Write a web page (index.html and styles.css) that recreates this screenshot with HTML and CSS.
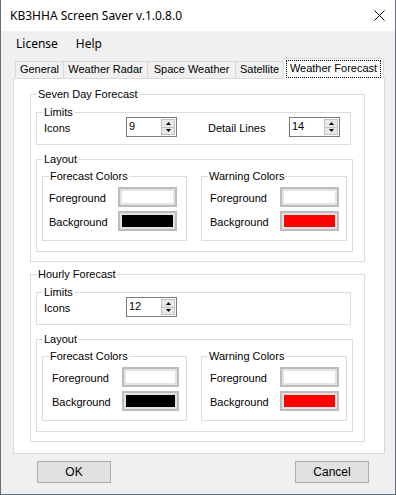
FILE: index.html
```html
<!DOCTYPE html>
<html lang="en">

<head>
    <meta charset="UTF-8">
    <meta name="viewport" content="width=device-width, initial-scale=1.0">
    <title>KB3HHA Screen Saver v.1.0.8.0</title>
    <link rel="stylesheet" href="styles.css">
</head>

<body>
    <div class="window">
        <div class="titlebar">
            <span class="title">KB3HHA Screen Saver v.1.0.8.0</span>
            <svg class="close" width="11" height="11" viewBox="0 0 11 11">
                <path d="M0.5 0.5L10.5 10.5M10.5 0.5L0.5 10.5" stroke="#000" stroke-width="1" fill="none" />
            </svg>
        </div>

        <div class="menubar">
            <span class="menu-item">License</span>
            <span class="menu-item">Help</span>
        </div>

        <div class="tabs">
            <div class="tab tab-general">General</div>
            <div class="tab tab-radar">Weather Radar</div>
            <div class="tab tab-space">Space Weather</div>
            <div class="tab tab-satellite">Satellite</div>
            <div class="tab tab-forecast active"><span class="focus">Weather Forecast</span></div>
        </div>

        <div class="panel">
            <!-- seven day -->
            <fieldset class="group outer">
                <legend>Seven Day Forecast</legend>
                <fieldset class="group limits">
                    <legend>Limits</legend>
                    <div class="limit-row">
                        <span class="lbl">Icons</span>
                        <div class="spin">
                            <span class="spin-value">9</span>
                            <div class="spin-btns">
                                <div class="spin-btn"><svg width="5" height="3" viewBox="0 0 5 3"><path d="M2.5 0L5 3H0Z" fill="#000"/></svg></div>
                                <div class="spin-btn"><svg width="5" height="3" viewBox="0 0 5 3"><path d="M0 0H5L2.5 3Z" fill="#000"/></svg></div>
                            </div>
                        </div>
                        <span class="lbl">Detail Lines</span>
                        <div class="spin">
                            <span class="spin-value">14</span>
                            <div class="spin-btns">
                                <div class="spin-btn"><svg width="5" height="3" viewBox="0 0 5 3"><path d="M2.5 0L5 3H0Z" fill="#000"/></svg></div>
                                <div class="spin-btn"><svg width="5" height="3" viewBox="0 0 5 3"><path d="M0 0H5L2.5 3Z" fill="#000"/></svg></div>
                            </div>
                        </div>
                    </div>
                </fieldset>
                <fieldset class="group layout">
                    <legend>Layout</legend>
                    <div class="color-groups">
                        <fieldset class="group colors forecast">
                            <legend>Forecast Colors</legend>
                            <div class="color-row">
                                <span class="lbl">Foreground</span>
                                <div class="swatch"><div class="fill white"></div></div>
                            </div>
                            <div class="color-row">
                                <span class="lbl">Background</span>
                                <div class="swatch"><div class="fill black"></div></div>
                            </div>
                        </fieldset>
                        <fieldset class="group colors warning">
                            <legend>Warning Colors</legend>
                            <div class="color-row">
                                <span class="lbl">Foreground</span>
                                <div class="swatch"><div class="fill white"></div></div>
                            </div>
                            <div class="color-row">
                                <span class="lbl">Background</span>
                                <div class="swatch"><div class="fill red"></div></div>
                            </div>
                        </fieldset>
                    </div>
                </fieldset>
            </fieldset>

            <!-- hourly -->
            <fieldset class="group outer hourly">
                <legend>Hourly Forecast</legend>
                <fieldset class="group limits">
                    <legend>Limits</legend>
                    <div class="limit-row">
                        <span class="lbl">Icons</span>
                        <div class="spin">
                            <span class="spin-value">12</span>
                            <div class="spin-btns">
                                <div class="spin-btn"><svg width="5" height="3" viewBox="0 0 5 3"><path d="M2.5 0L5 3H0Z" fill="#000"/></svg></div>
                                <div class="spin-btn"><svg width="5" height="3" viewBox="0 0 5 3"><path d="M0 0H5L2.5 3Z" fill="#000"/></svg></div>
                            </div>
                        </div>
                    </div>
                </fieldset>
                <fieldset class="group layout">
                    <legend>Layout</legend>
                    <div class="color-groups">
                        <fieldset class="group colors forecast shifted">
                            <legend>Forecast Colors</legend>
                            <div class="color-row">
                                <span class="lbl">Foreground</span>
                                <div class="swatch"><div class="fill white"></div></div>
                            </div>
                            <div class="color-row">
                                <span class="lbl">Background</span>
                                <div class="swatch"><div class="fill black"></div></div>
                            </div>
                        </fieldset>
                        <fieldset class="group colors warning">
                            <legend>Warning Colors</legend>
                            <div class="color-row">
                                <span class="lbl">Foreground</span>
                                <div class="swatch"><div class="fill white"></div></div>
                            </div>
                            <div class="color-row">
                                <span class="lbl">Background</span>
                                <div class="swatch"><div class="fill red"></div></div>
                            </div>
                        </fieldset>
                    </div>
                </fieldset>
            </fieldset>
        </div>

        <div class="footer">
            <button type="button" class="btn">OK</button>
            <button type="button" class="btn">Cancel</button>
        </div>
    </div>
</body>

</html>
```

FILE: styles.css
```css
* {
    box-sizing: border-box;
}

body {
    margin: 0;
    background-color: #fff;
    font-family: "Liberation Sans", Arial, sans-serif;
    font-size: 11px;
    color: #000;
}

.window {
    width: 396px;
    height: 495px;
    background-color: #f0f0f0;
    border: 1px solid #646e78;
    border-top: none;
}

/* title + menu use the system UI font */
.titlebar {
    height: 31px;
    background-color: #fff;
    display: flex;
    align-items: center;
    justify-content: space-between;
    padding: 0 10px 0 9px;
    font-family: "Noto Sans", "Open Sans", sans-serif;
    font-size: 12px;
}

.close {
    display: block;
}

.menubar {
    height: 24px;
    display: flex;
    align-items: center;
    padding-left: 9px;
    font-family: "Noto Sans", "Open Sans", sans-serif;
    font-size: 12px;
}

.menu-item {
    padding: 0 6px;
    margin-right: 6px;
}

/* tabs */
.tabs {
    height: 20px;
    margin-top: 3px;
    padding-left: 14px;
    display: flex;
    align-items: flex-end;
}

.tab {
    height: 17px;
    line-height: 15px;
    text-align: center;
    background-color: #f0f0f0;
    border: 1px solid #d9d9d9;
    border-bottom: none;
    margin-left: -1px;
    white-space: nowrap;
}

.tab-general {
    width: 49px;
    margin-left: 0;
}

.tab-radar {
    width: 85px;
}

.tab-space {
    width: 89px;
}

.tab-satellite {
    width: 49px;
}

.tab-forecast {
    width: 101px;
}

.tab.active {
    height: 21px;
    margin-bottom: -1px;
    background-color: #fff;
    position: relative;
    z-index: 1;
    padding: 1px 2px 0;
}

.focus {
    display: block;
    height: 18px;
    line-height: 15px;
    border: 1px dotted #000;
}

/* panel */
.panel {
    width: 372px;
    height: 376px;
    margin-left: 12px;
    background-color: #fff;
    border: 1px solid #d9d9d9;
    padding: 9px 0 0 16px;
}

/* group boxes: legend sits 8px in from the border, content is indented by margins */
.group {
    margin: 0;
    padding: 0;
    min-width: 0;
    border: 1px solid #dcdcdc;
}

.group legend {
    padding: 0 1px;
    margin-left: 6px;
    line-height: 13px;
}

.outer {
    width: 335px;
    padding: 5px 0 9px 0;
}

.hourly {
    margin-top: 6px;
}

.outer > .group {
    margin-left: 5px;
}

.limits {
    width: 315px;
    padding-bottom: 7px;
}

.limit-row {
    display: grid;
    grid-template-columns: 82px 82px 81px 51px;
    align-items: center;
    margin: -2px 0 0 7px;
}

.lbl {
    padding-top: 2px;
    white-space: nowrap;
}

.spin {
    width: 51px;
    height: 20px;
    border: 1px solid #7a7a7a;
    background-color: #fff;
    display: flex;
    justify-content: space-between;
    padding: 1px;
}

.spin-value {
    padding-left: 1px;
    line-height: 15px;
}

.spin-btns {
    width: 14px;
    display: flex;
    flex-direction: column;
}

.spin-btn {
    flex: 1;
    background-color: #e8e8e8;
    border: 1px solid #c2c2c2;
    display: flex;
    align-items: center;
    justify-content: center;
}

.spin-btn + .spin-btn {
    border-top: none;
}

.layout {
    width: 317px;
    margin-top: 8px;
    padding: 4px 0 10px 0;
}

.color-groups {
    display: grid;
    grid-template-columns: 145px 146px;
    column-gap: 14px;
    margin-left: 5px;
}

.colors {
    padding: 4px 0 9px 0;
}

.color-row {
    display: grid;
    grid-template-columns: 69px 59px;
    align-items: center;
    margin-left: 6px;
}

.colors.warning .color-row {
    grid-template-columns: 70px 59px;
    margin-left: 8px;
}

.colors.shifted .color-row {
    grid-template-columns: 70px 57px;
    margin-left: 9px;
}

.color-row + .color-row {
    margin-top: 4px;
}

.swatch {
    height: 20px;
    border: 2px solid #bcbcbc;
    background-color: #e3e3e3;
    padding: 2px;
}

.fill {
    height: 100%;
}

.white {
    background-color: #fff;
}

.black {
    background-color: #000;
}

.red {
    background-color: #ff0000;
}

/* bottom buttons */
.footer {
    display: flex;
    justify-content: space-between;
    margin-top: 7px;
    padding: 0 26px 0 36px;
}

.btn {
    width: 74px;
    height: 22px;
    background-color: #e1e1e1;
    border: 1px solid #adadad;
    font-family: "Liberation Sans", Arial, sans-serif;
    font-size: 12px;
    color: #000;
    padding: 0;
}
```
